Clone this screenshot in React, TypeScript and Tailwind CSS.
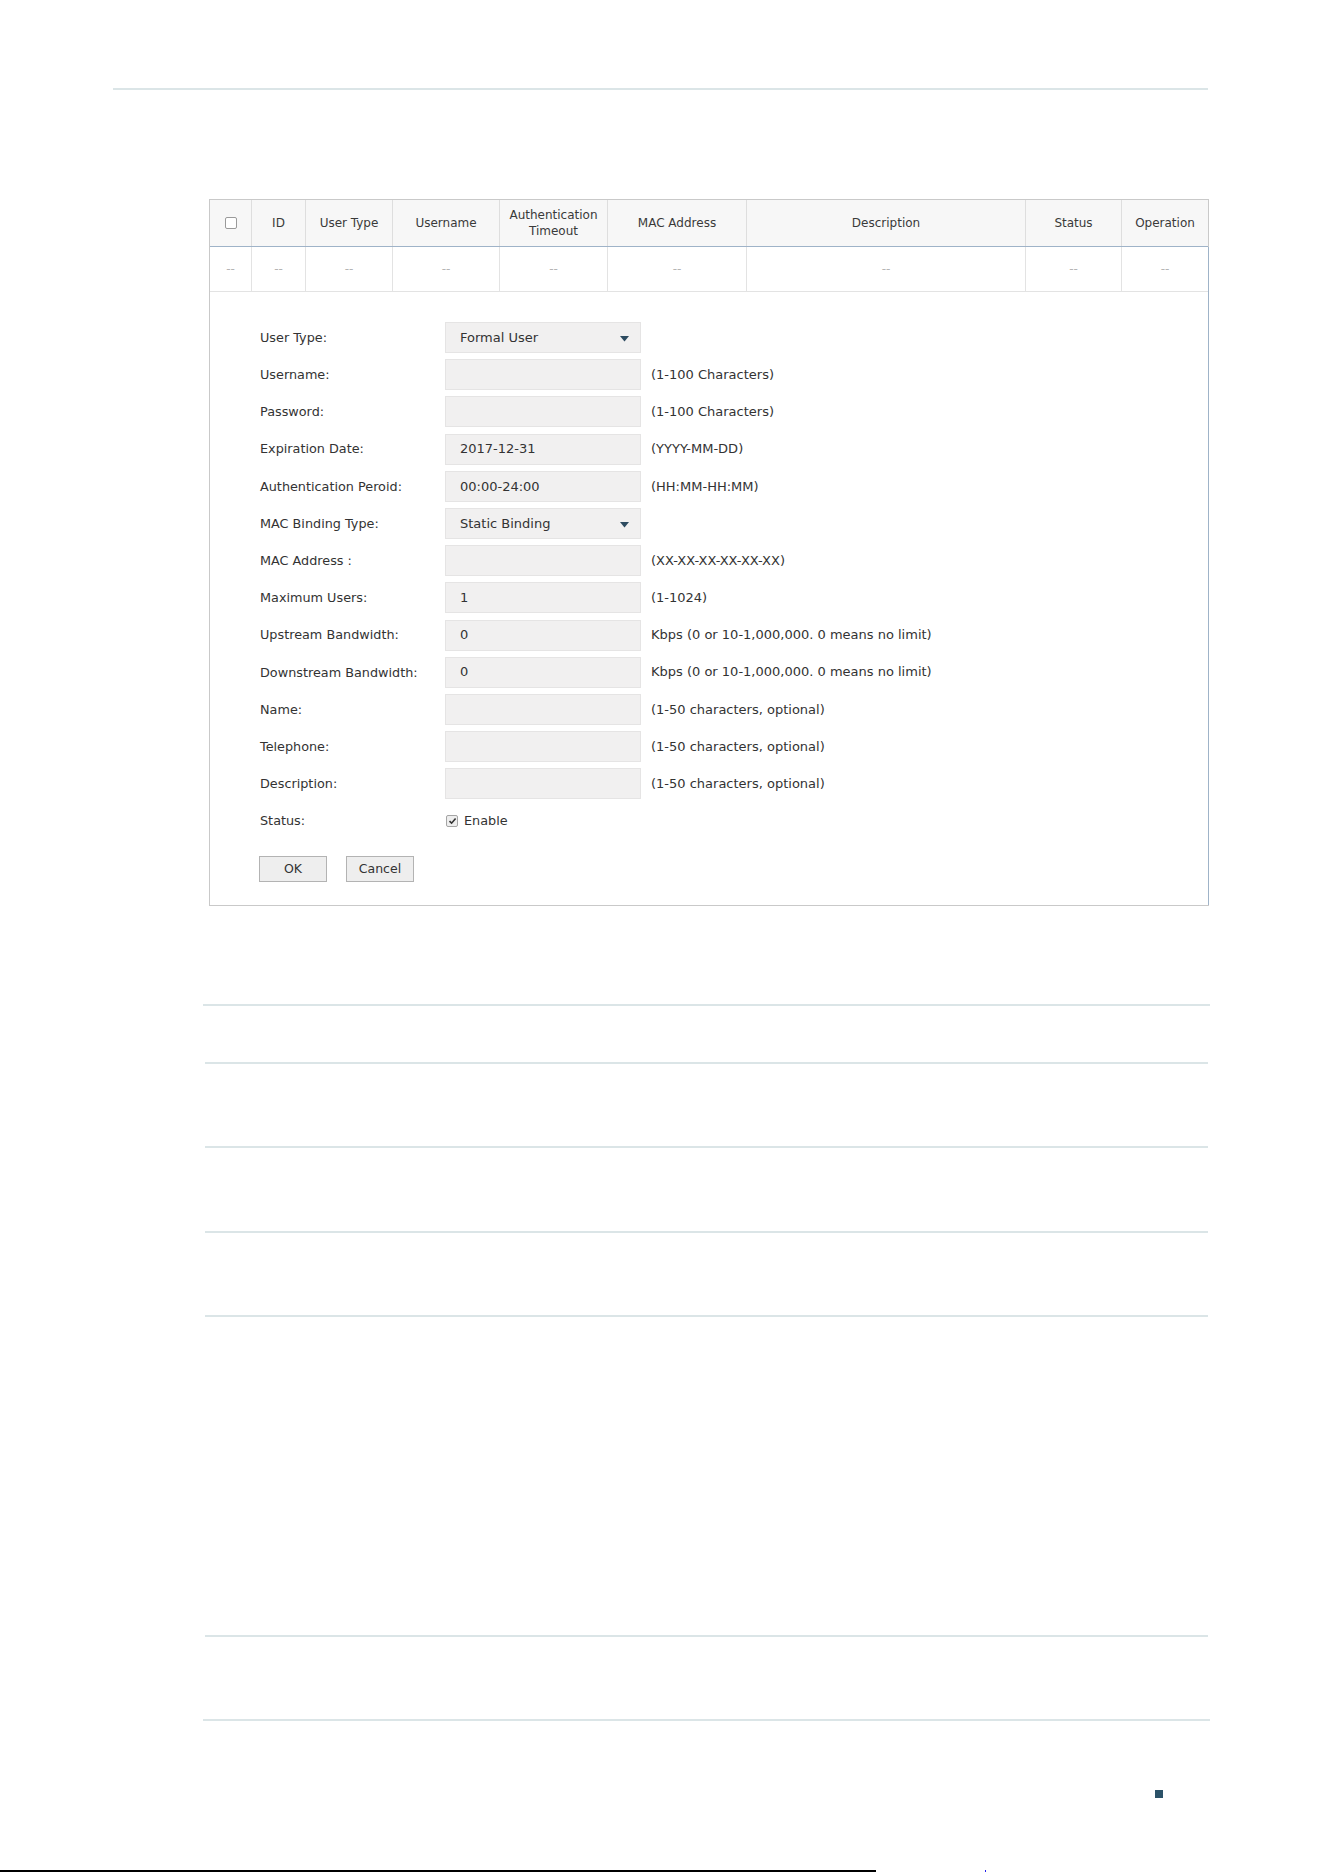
import React from "react";

type Row = { label: string; kind?: "select" | "input"; value?: string; hint?: string };

const rows: Row[] = [
  { label: "User Type:", kind: "select", value: "Formal User" },
  { label: "Username:", hint: "(1-100 Characters)" },
  { label: "Password:", hint: "(1-100 Characters)" },
  { label: "Expiration Date:", value: "2017-12-31", hint: "(YYYY-MM-DD)" },
  { label: "Authentication Peroid:", value: "00:00-24:00", hint: "(HH:MM-HH:MM)" },
  { label: "MAC Binding Type:", kind: "select", value: "Static Binding" },
  { label: "MAC Address :", hint: "(XX-XX-XX-XX-XX-XX)" },
  { label: "Maximum Users:", value: "1", hint: "(1-1024)" },
  { label: "Upstream Bandwidth:", value: "0", hint: "Kbps (0 or 10-1,000,000. 0 means no limit)" },
  { label: "Downstream Bandwidth:", value: "0", hint: "Kbps (0 or 10-1,000,000. 0 means no limit)" },
  { label: "Name:", hint: "(1-50 characters, optional)" },
  { label: "Telephone:", hint: "(1-50 characters, optional)" },
  { label: "Description:", hint: "(1-50 characters, optional)" },
];

const headers = [
  "",
  "ID",
  "User Type",
  "Username",
  "Authentication\nTimeout",
  "MAC Address",
  "Description",
  "Status",
  "Operation",
];

function Rule({ mt, wide }: { mt: string; wide?: boolean }) {
  return (
    <div className={mt + (wide ? " ml-[203px] w-[1007px]" : " ml-[205px] w-[1003px]") + " h-[2px] bg-[#dbe5e7] shrink-0"} />
  );
}

export default function App() {
  return (
    <div
      className="w-[1324px] h-[1872px] bg-white flex flex-col text-[#333] overflow-hidden"
      style={{ fontFamily: '"DejaVu Sans", Verdana, sans-serif' }}
    >
      <div className="mt-[88px] ml-[113px] w-[1095px] h-[2px] bg-[#dbe5e7] shrink-0" />

      {/* table + form box */}
      <div className="mt-[109px] ml-[209px] w-[1000px] border border-[#c9c9c9] shrink-0">
        <div className="grid grid-cols-[42px_54px_87px_107px_108px_139px_279px_96px_86px] bg-[#f7f7f7] border-b border-[#9fb3c8] h-[47px] text-[12px] text-[#3a3a3a]">
          {headers.map((h, i) => (
            <div
              key={i}
              className={
                "flex items-center justify-center text-center leading-[16px] whitespace-pre-line " +
                (i < headers.length - 1 ? "border-r border-[#dedede]" : "")
              }
            >
              {i === 0 ? (
                <span className="w-[12px] h-[12px] border border-[#9a9a9a] rounded-[2px] bg-white" />
              ) : (
                h
              )}
            </div>
          ))}
        </div>
        <div className="border-r border-[#9fb3c8] -mr-px">
          <div className="grid grid-cols-[42px_54px_87px_107px_108px_139px_279px_96px_86px] h-[45px] border-b border-[#e3e3e3] text-[12px] text-[#b5b5b5]">
            {headers.map((_, i) => (
              <div
                key={i}
                className={
                  "flex items-center justify-center " + (i < headers.length - 1 ? "border-r border-[#e3e3e3]" : "")
                }
              >
                --
              </div>
            ))}
          </div>

          <div className="pt-[30px] pl-[50px] pb-[23px] text-[13px]">
            <div className="flex flex-col gap-[6.2px]">
              {rows.map((r) => (
                <div key={r.label} className="flex items-center h-[31px]">
                  <div className="w-[185px] shrink-0 text-[12.8px]">{r.label}</div>
                  <div className="relative w-[196px] h-[31px] bg-[#f1f0f0] border border-[#e5e4e4] flex items-center pl-[14px] shrink-0">
                    {r.value}
                    {r.kind === "select" && (
                      <svg className="absolute right-[11px] top-[13px]" width="9" height="6" viewBox="0 0 9 6">
                        <path d="M0 0 H9 L4.5 5.5 Z" fill="#2d4b60" />
                      </svg>
                    )}
                  </div>
                  {r.hint && <div className="ml-[10px] whitespace-nowrap">{r.hint}</div>}
                </div>
              ))}
              <div className="flex items-center h-[31px]">
                <div className="w-[185px] shrink-0 text-[12.8px]">Status:</div>
                <span className="w-[12px] h-[12px] ml-[1px] border border-[#a5a5a5] rounded-[2px] bg-[#eeeeee] flex items-center justify-center">
                  <svg width="9" height="8" viewBox="0 0 9 8">
                    <path d="M1.5 4.2 L3.6 6.2 L7.6 1.6" stroke="#333" strokeWidth="1.6" fill="none" />
                  </svg>
                </span>
                <span className="ml-[6px] text-[12.8px]">Enable</span>
              </div>
            </div>
            <div className="flex gap-[19px] mt-[20px] -ml-px text-[12.5px]">
              <button className="w-[68px] h-[26px] bg-[#eeeeee] border border-[#b3b3b3] text-[#333]">OK</button>
              <button className="w-[68px] h-[26px] bg-[#eeeeee] border border-[#b3b3b3] text-[#333]">Cancel</button>
            </div>
          </div>
        </div>
      </div>

      <Rule mt="mt-[98px]" wide />
      <Rule mt="mt-[56px]" />
      <Rule mt="mt-[82px]" />
      <Rule mt="mt-[83px]" />
      <Rule mt="mt-[82px]" />
      <Rule mt="mt-[318px]" />
      <Rule mt="mt-[82px]" wide />

      <div className="mt-[69px] ml-[1155px] w-[8px] h-[8px] bg-[#2b5268] shrink-0" />

      <div className="mt-auto flex items-end h-[2px] shrink-0">
        <div className="w-[876px] h-[2px] bg-black" />
        <div className="ml-[109px] w-[1px] h-[2px] bg-[#2222ee]" />
      </div>
    </div>
  );
}
